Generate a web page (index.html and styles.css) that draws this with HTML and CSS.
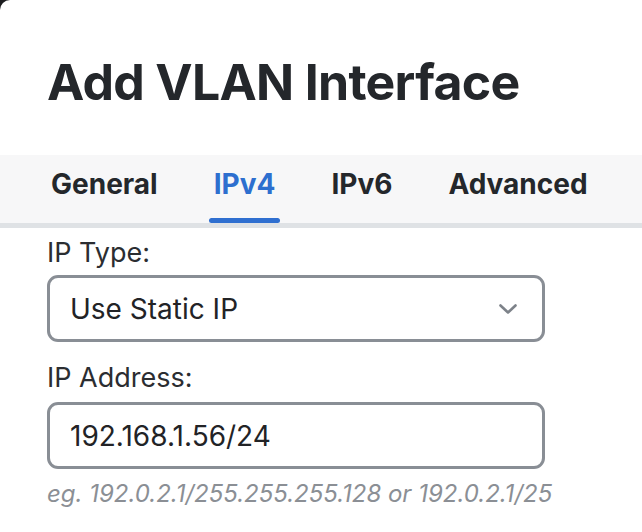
FILE: index.html
```html
<!DOCTYPE html>
<html lang="en">
<head>
<meta charset="utf-8">
<title>Add VLAN Interface</title>
<link rel="stylesheet" href="styles.css">
</head>
<body>
<div class="modal">
  <h1 class="title">Add VLAN Interface</h1>
  <nav class="tabs">
    <div class="tab">General</div>
    <div class="tab active">IPv4</div>
    <div class="tab">IPv6</div>
    <div class="tab">Advanced</div>
  </nav>
  <div class="form">
    <div class="field">
      <div class="label">IP Type:</div>
      <div class="control select">
        <span>Use Static IP</span>
        <svg class="chev" width="20" height="12" viewBox="0 0 20 12"><polyline points="2.5,2.5 10,9.5 17.5,2.5" fill="none" stroke="#7d8289" stroke-width="2.6" stroke-linecap="round" stroke-linejoin="round"/></svg>
      </div>
    </div>
    <div class="field">
      <div class="label">IP Address:</div>
      <div class="control input"><span>192.168.1.56/24</span></div>
      <div class="hint">eg. 192.0.2.1/255.255.255.128 or 192.0.2.1/25</div>
    </div>
  </div>
</div>
</body>
</html>
```
FILE: styles.css
```css
html, body {
  margin: 0;
  padding: 0;
  background: #1c1d1f;
}
body {
  width: 642px;
  height: 532px;
  overflow: hidden;
  font-family: Inter, "Noto Sans", sans-serif;
}
.modal {
  background: #ffffff;
  border-top-left-radius: 10px;
  height: 532px;
  padding-top: 52px;
  box-sizing: border-box;
}
.title {
  margin: 0 0 0 47px;
  font-size: 50px;
  line-height: 60px;
  font-weight: 700;
  color: #24272b;
  letter-spacing: -0.7px;
}
.tabs {
  margin-top: 43px;
  display: flex;
  gap: 56px;
  padding-left: 51px;
  background: #f7f7f8;
  border-bottom: 5px solid #dfe2e5;
}
.tab {
  position: relative;
  font-size: 28px;
  line-height: 34px;
  font-weight: 700;
  color: #24272b;
  padding: 12px 0 22px;
}
.tab.active {
  color: #2d6fcf;
}
.tab.active::after {
  content: "";
  position: absolute;
  left: -5px;
  right: -5px;
  bottom: 0;
  height: 5px;
  border-radius: 3px;
  background: #2f6fd0;
}
.form {
  padding: 9px 0 0 47px;
}
.field {
  width: 498px;
  margin-bottom: 20px;
}
.label {
  font-size: 27px;
  line-height: 32px;
  color: #2b2d31;
  margin-bottom: 6px;
}
.field + .field .label {
  margin-bottom: 8px;
}
.control {
  box-sizing: border-box;
  height: 67px;
  border: 3px solid #898e95;
  border-radius: 11px;
  display: flex;
  align-items: center;
  justify-content: space-between;
  padding: 0 24px 0 20px;
  font-size: 28px;
  color: #222326;
}
.chev {
  display: block;
  margin-top: 1px;
}
.hint {
  margin-top: 11px;
  font-size: 24px;
  line-height: 28px;
  font-style: italic;
  color: #8b8f95;
  white-space: nowrap;
}
```
